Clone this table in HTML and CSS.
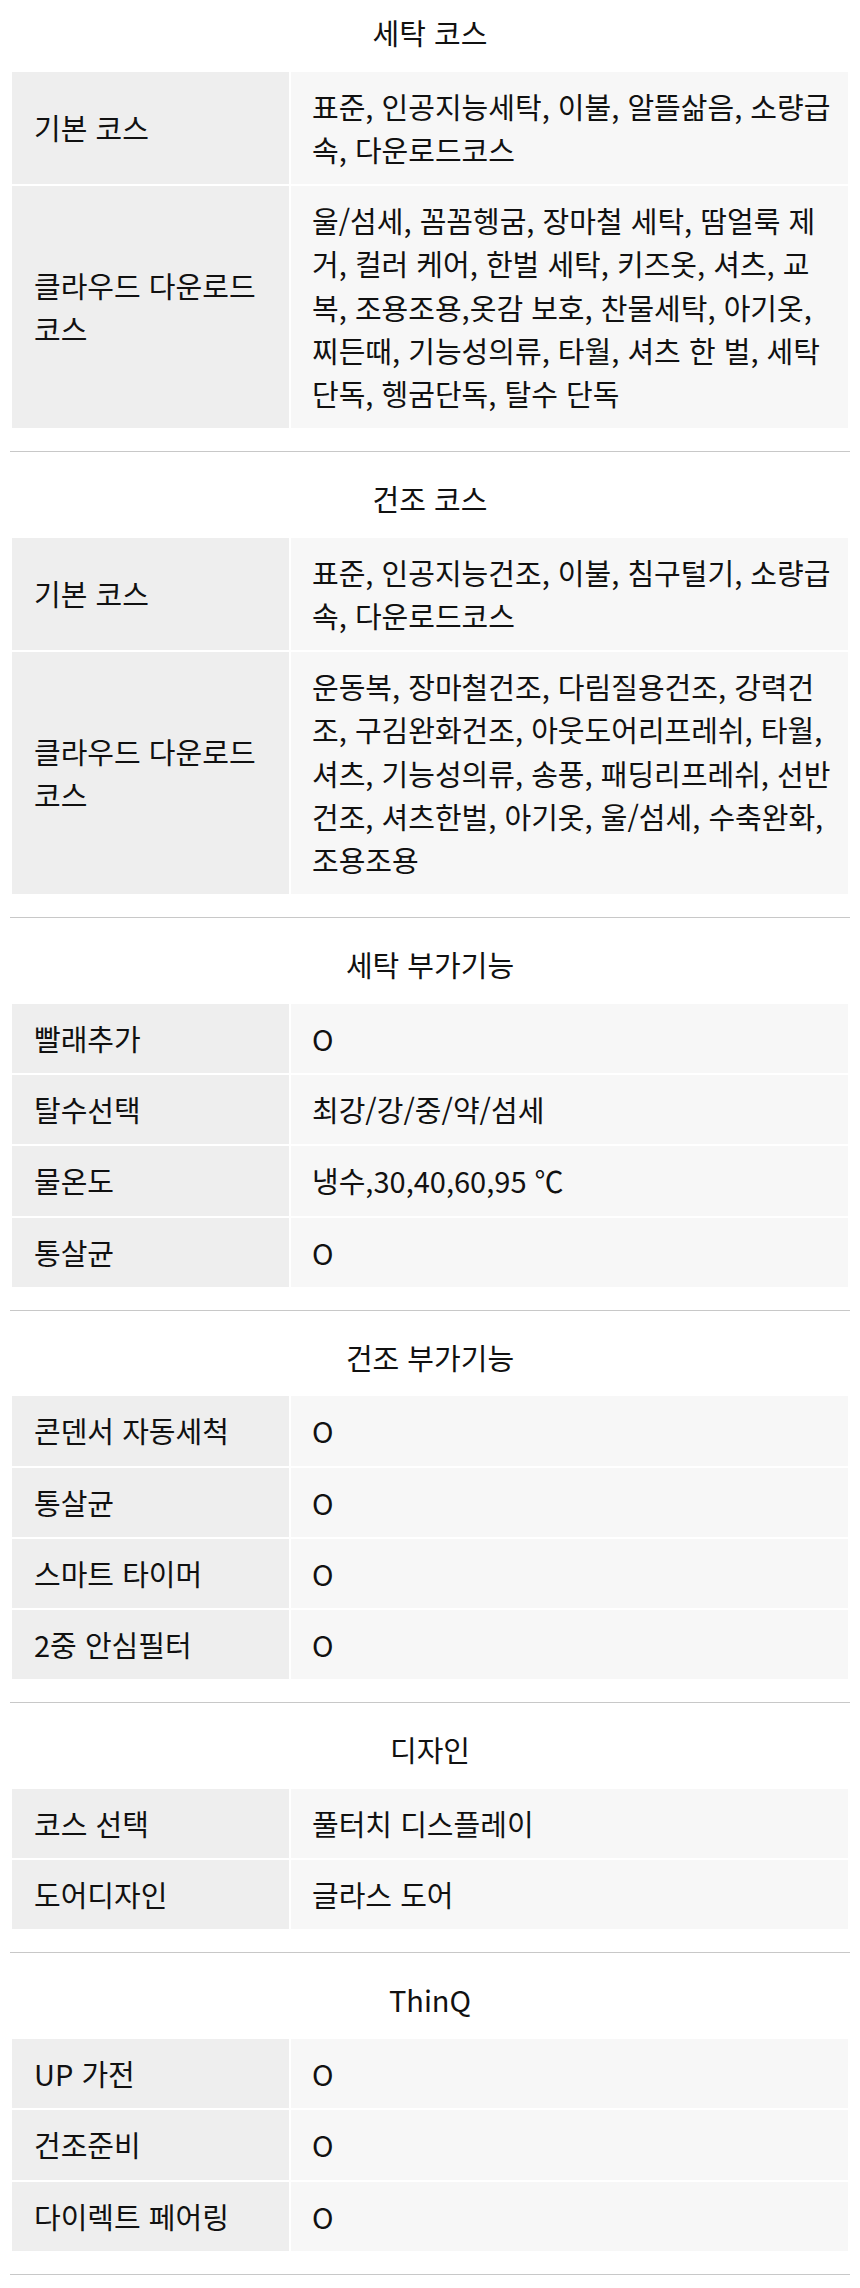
FILE: index.html
```html
<!DOCTYPE html>
<html lang="ko">
<head>
<meta charset="utf-8">
<title>제품 사양</title>
<link rel="stylesheet" href="styles.css">
</head>
<body>
<main class="spec">
  <section class="group">
    <h3 class="group-title">세탁 코스</h3>
    <table class="spec-table">
      <tr><th>기본 코스</th><td>표준, 인공지능세탁, 이불, 알뜰삶음, 소량급속, 다운로드코스</td></tr>
      <tr><th>클라우드 다운로드 코스</th><td>울/섬세, 꼼꼼헹굼, 장마철 세탁, 땀얼룩 제거, 컬러 케어, 한벌 세탁, 키즈옷, 셔츠, 교복, 조용조용,옷감 보호, 찬물세탁, 아기옷, 찌든때, 기능성의류, 타월, 셔츠 한 벌, 세탁단독, 헹굼단독, 탈수 단독</td></tr>
    </table>
  </section>
  <section class="group">
    <h3 class="group-title">건조 코스</h3>
    <table class="spec-table">
      <tr><th>기본 코스</th><td>표준, 인공지능건조, 이불, 침구털기, 소량급속, 다운로드코스</td></tr>
      <tr><th>클라우드 다운로드 코스</th><td>운동복, 장마철건조, 다림질용건조, 강력건조, 구김완화건조, 아웃도어리프레쉬, 타월, 셔츠, 기능성의류, 송풍, 패딩리프레쉬, 선반건조, 셔츠한벌, 아기옷, 울/섬세, 수축완화, 조용조용</td></tr>
    </table>
  </section>
  <section class="group">
    <h3 class="group-title">세탁 부가기능</h3>
    <table class="spec-table">
      <tr><th>빨래추가</th><td>O</td></tr>
      <tr><th>탈수선택</th><td>최강/강/중/약/섬세</td></tr>
      <tr><th>물온도</th><td>냉수,30,40,60,95 ℃</td></tr>
      <tr><th>통살균</th><td>O</td></tr>
    </table>
  </section>
  <section class="group">
    <h3 class="group-title">건조 부가기능</h3>
    <table class="spec-table">
      <tr><th>콘덴서 자동세척</th><td>O</td></tr>
      <tr><th>통살균</th><td>O</td></tr>
      <tr><th>스마트 타이머</th><td>O</td></tr>
      <tr><th>2중 안심필터</th><td>O</td></tr>
    </table>
  </section>
  <section class="group">
    <h3 class="group-title">디자인</h3>
    <table class="spec-table">
      <tr><th>코스 선택</th><td>풀터치 디스플레이</td></tr>
      <tr><th>도어디자인</th><td>글라스 도어</td></tr>
    </table>
  </section>
  <section class="group">
    <h3 class="group-title">ThinQ</h3>
    <table class="spec-table">
      <tr><th>UP 가전</th><td>O</td></tr>
      <tr><th>건조준비</th><td>O</td></tr>
      <tr><th>다이렉트 페어링</th><td>O</td></tr>
    </table>
  </section>
</main>
</body>
</html>
```

FILE: styles.css
```css
html, body {
  margin: 0;
  padding: 0;
  background: #ffffff;
}

body {
  font-family: "Noto Sans CJK KR", "Noto Sans", sans-serif;
  font-size: 29px;
  line-height: 43.2px;
  color: #111111;
}

.spec {
  padding: 0 10px;
}

.group {
  padding: 25px 0 21px;
  border-bottom: 1px solid #c8c8c8;
}

.group:first-child {
  padding-top: 11px;
}

.group-title {
  margin: 0 0 15.5px;
  font-size: inherit;
  font-weight: 400;
  line-height: inherit;
  text-align: center;
}

.spec-table {
  width: 100%;
  border-collapse: separate;
  border-spacing: 2px;
  table-layout: fixed;
}

.spec-table th,
.spec-table td {
  vertical-align: middle;
  text-align: left;
  font-weight: 400;
  padding: 13px 8px 13px 21px;
}

.spec-table th {
  box-sizing: border-box;
  width: 277px;
  padding-left: 22px;
  padding-right: 10px;
  background: #eeeeee;
}

.spec-table td {
  background: #f7f7f7;
}
```
